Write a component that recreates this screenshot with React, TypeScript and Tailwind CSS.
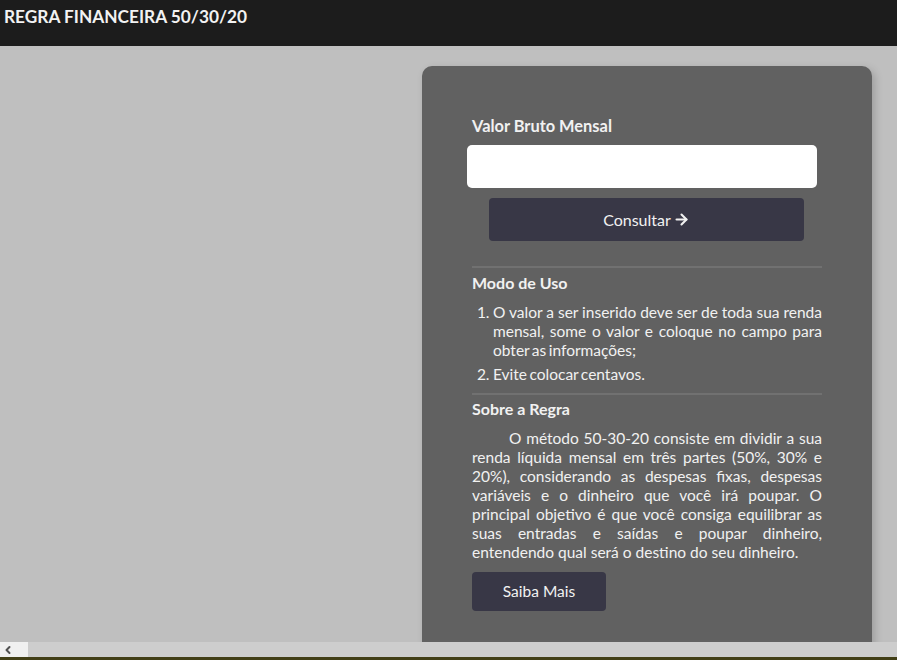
import { ArrowRight, ChevronLeft } from "lucide-react";

export default function App() {
  return (
    <div className="h-[660px] w-full flex flex-col bg-[#bfbfbf] font-['Lato',sans-serif] overflow-hidden">
      {/* Header */}
      <header className="h-[46px] shrink-0 bg-[#1c1c1c] flex items-start px-[4px] pt-[7px]">
        <h1 className="text-[17.3px] font-bold text-[#f2f2f2] uppercase leading-[20px]">
          Regra Financeira 50/30/20
        </h1>
      </header>

      {/* Main */}
      <main className="flex-1 min-h-0 overflow-hidden flex justify-end pr-[25px] pt-[20px]">
        <div className="w-[450px] shrink-0 h-max bg-[#616161] rounded-[10px] shadow-[3px_3px_8px_rgba(0,0,0,0.18)] p-[50px] text-[#f1f1f1]">
          <label className="block text-[16.4px] font-bold leading-[20px]">Valor Bruto Mensal</label>
          <input
            type="text"
            className="block mt-[9px] ml-[-5px] w-[350px] h-[43px] bg-white rounded-[5px] outline-none px-3 text-black"
          />
          <button className="mt-[10px] ml-[17px] w-[315px] h-[43px] bg-[#383746] rounded-[4px] text-[16px] text-[#f1f1f1] flex items-center justify-center gap-[2px]">
            Consultar
            <ArrowRight size={17} strokeWidth={3} />
          </button>

          <div className="mt-[25px] h-[2px] bg-[#717171]" />

          <h2 className="mt-[5px] text-[16px] font-bold leading-[20px]">Modo de Uso</h2>
          <ol className="mt-[10px] list-decimal pl-[20px] text-[15.5px] leading-[19px] text-justify flex flex-col gap-[5px] [word-spacing:-1.5px]">
            <li className="pl-[1px]">
              O valor a ser inserido deve ser de toda sua renda mensal, some o valor e coloque no campo para obter as
              informações;
            </li>
            <li className="pl-[1px]">Evite colocar centavos.</li>
          </ol>

          <div className="mt-[9px] h-[2px] bg-[#717171]" />

          <h2 className="mt-[4px] text-[16px] font-bold leading-[20px]">Sobre a Regra</h2>
          <p className="mt-[10px] text-[15.5px] leading-[19px] text-justify indent-[37px]">
            O método 50-30-20 consiste em dividir a sua renda líquida mensal em três partes (50%, 30% e 20%),
            considerando as despesas fixas, despesas variáveis e o dinheiro que você irá poupar. O principal objetivo
            é que você consiga equilibrar as suas entradas e saídas e poupar dinheiro, entendendo qual será o destino
            do seu dinheiro.
          </p>
          <button className="mt-[10px] w-[134px] h-[39px] bg-[#383746] rounded-[4px] text-[15.5px] text-[#f1f1f1]">
            Saiba Mais
          </button>
        </div>
      </main>

      {/* Horizontal scrollbar */}
      <div className="h-[15px] shrink-0 bg-[#cdcdcd] flex">
        <div className="w-[28px] h-full bg-[#f0f0f0] flex items-center justify-start pl-[2px] text-[#505050]">
          <ChevronLeft size={12} strokeWidth={4} />
        </div>
      </div>
      <div className="h-[3px] shrink-0 bg-[#423f17]" />
    </div>
  );
}
